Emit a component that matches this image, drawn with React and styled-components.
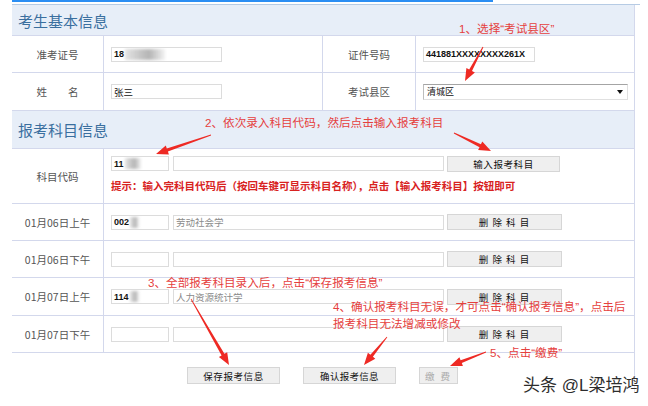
import React from 'react';
import styled, { createGlobalStyle } from 'styled-components';

const GlobalStyle = createGlobalStyle`
  html, body {
    margin: 0;
    padding: 0;
    background: #fff;
  }
  body {
    font-family: "Liberation Sans", "Noto Sans CJK SC", sans-serif;
  }
`;

const CJK = `"Noto Sans CJK SC", "Liberation Sans", sans-serif`;
const MIXED = `"Liberation Sans", "Noto Sans CJK SC", sans-serif`;
const LINE = '#d3d8ec';

const Page = styled.div`
  position: relative;
  width: 648px;
  height: 406px;
  padding-left: 12px;
  box-sizing: border-box;
  overflow: hidden;
`;

const TabLine = styled.div`
  width: 481px;
  height: 2px;
  background: #2b8ef3;
`;

const Rule = styled.div`
  width: 628px;
  height: 1px;
  margin-top: 2px;
  background: #b6cbe4;
`;

const Frame = styled.div`
  width: 623px;
  box-sizing: border-box;
  border-right: 1px solid ${LINE};
`;

const SectionTitle = styled.div`
  height: ${p => p.$h}px;
  box-sizing: border-box;
  display: flex;
  align-items: center;
  padding-left: 6px;
  background: #e7eef8;
  border-bottom: 1px solid ${LINE};
  color: #3a6f9f;
  font: 15px ${CJK};
`;

const InfoGrid = styled.div`
  display: grid;
  grid-template-columns: 92px 219px 93px 1fr;
  grid-template-rows: 37px 38px;
`;

const Cell = styled.div`
  box-sizing: border-box;
  display: flex;
  align-items: center;
  justify-content: ${p => (p.$label ? 'center' : 'flex-start')};
  padding-left: ${p => (p.$label ? 0 : 7)}px;
  border-bottom: 1px solid ${LINE};
  border-right: ${p => (p.$last ? 'none' : `1px solid ${LINE}`)};
  color: #555;
  font: 10.5px ${CJK};
  white-space: pre;
`;

const Field = styled.div`
  width: ${p => p.$w}px;
  height: 15px;
  box-sizing: border-box;
  flex: none;
  display: flex;
  align-items: center;
  padding-left: 2px;
  border: 1px solid #dcdcdc;
  background: #fff;
  overflow: hidden;
  white-space: nowrap;
  color: ${p => (p.$muted ? '#8a8a8a' : '#111')};
  font: ${p => (p.$bold ? 'bold 9px "Liberation Sans", sans-serif' : `9.5px ${CJK}`)};
`;

const Smudge = styled.span`
  display: inline-block;
  width: ${p => p.$w}px;
  height: 11px;
  margin-left: 1px;
  background: linear-gradient(90deg, rgba(200, 200, 200, 0.5), rgba(172, 172, 172, 0.9) 60%, rgba(215, 215, 215, 0.3));
  filter: blur(1.4px);
`;

const Select = styled.div`
  width: 205px;
  height: 16px;
  box-sizing: border-box;
  display: flex;
  align-items: center;
  justify-content: space-between;
  padding: 0 4px 0 3px;
  border: 1px solid #e0e0e0;
  border-top-color: #a4a4a4;
  border-left-color: #bdbdbd;
  font: 9px ${CJK};
  color: #111;
`;

const Caret = styled.span`
  width: 0;
  height: 0;
  border-left: 3px solid transparent;
  border-right: 3px solid transparent;
  border-top: 4px solid #111;
`;

const SubjectRow = styled.div`
  display: grid;
  grid-template-columns: 92px 1fr;
  height: ${p => p.$h}px;
  box-sizing: border-box;
  border-bottom: 1px solid ${LINE};
`;

const RowLabel = styled.div`
  display: flex;
  align-items: center;
  justify-content: center;
  border-right: 1px solid ${LINE};
  color: #555;
  font: 10.5px ${CJK};
`;

const RowBody = styled.div`
  display: flex;
  flex-direction: column;
  justify-content: ${p => (p.$top ? 'flex-start' : 'center')};
  padding: ${p => (p.$top ? '6px' : '0')} 0 0 7px;
  gap: 7px;
`;

const InputLine = styled.div`
  display: flex;
  align-items: center;
  gap: 4px;
  height: 17px;
`;

const Hint = styled.div`
  color: #d8231f;
  font: bold 10.5px/14px ${CJK};
  white-space: nowrap;
`;

const Btn = styled.button`
  width: ${p => p.$w}px;
  height: ${p => p.$h || 16}px;
  box-sizing: border-box;
  flex: none;
  padding: 0;
  margin-left: ${p => p.$ml || 0}px;
  border: 1px solid #d6d6d6;
  background: #efefef;
  color: ${p => (p.disabled ? '#a9a9a9' : '#111')};
  font: 9.5px ${CJK};
  letter-spacing: ${p => p.$ls || 0}px;
  white-space: pre;
`;

const Footer = styled.div`
  height: 40px;
  display: flex;
  align-items: flex-start;
  gap: 23px;
  padding: 14px 0 0 175px;
  box-sizing: border-box;
`;

const Note = styled.div`
  position: absolute;
  left: ${p => p.$x}px;
  top: ${p => p.$y}px;
  color: #e5403d;
  font: 11.6px/17px ${MIXED};
  white-space: pre;
`;

const Watermark = styled.div`
  position: absolute;
  left: 523px;
  top: 375px;
  color: #2d2d2d;
  font: 17px/22px ${MIXED};
  white-space: pre;
  text-shadow: 0 0 2px #fff, 0 0 3px #fff;
`;

const Overlay = styled.svg`
  position: absolute;
  left: 0;
  top: 0;
  pointer-events: none;
`;

function arrowPoints([x1, y1, x2, y2]) {
  const dx = x2 - x1;
  const dy = y2 - y1;
  const len = Math.hypot(dx, dy);
  const ux = dx / len;
  const uy = dy / len;
  const nx = -uy;
  const ny = ux;
  const headLen = 12;
  const bx = x2 - ux * headLen;
  const by = y2 - uy * headLen;
  const pt = (x, y, w) => `${(x + nx * w).toFixed(1)},${(y + ny * w).toFixed(1)}`;
  return [
    pt(x1, y1, 0.4),
    pt(bx, by, 1.6),
    pt(bx, by, 4.8),
    `${x2},${y2}`,
    pt(bx, by, -4.8),
    pt(bx, by, -1.6),
    pt(x1, y1, -0.4),
  ].join(' ');
}

const arrows = [
  [483, 47, 465, 81],
  [211, 135, 156, 154],
  [454, 133, 491, 151],
  [191, 299, 229, 365],
  [387, 337, 364, 365],
  [486, 352, 450, 366],
];

const sessions = [
  { label: '01月06日上午', code: '002', name: '劳动社会学', h: 37 },
  { label: '01月06日下午', h: 37 },
  { label: '01月07日上午', code: '114', name: '人力资源统计学', h: 38 },
  { label: '01月07日下午', h: 37 },
];

export default function App() {
  return (
    <Page>
      <GlobalStyle />
      <TabLine />
      <Rule />
      <Frame>
        <SectionTitle $h={31}>考生基本信息</SectionTitle>
        <InfoGrid>
          <Cell $label>准考证号</Cell>
          <Cell>
            <Field $w={111} $bold>
              18<Smudge $w={40} />
            </Field>
          </Cell>
          <Cell $label>证件号码</Cell>
          <Cell $last>
            <Field $w={112} $bold>441881XXXXXXXX261X</Field>
          </Cell>
          <Cell $label>{'姓　　名'}</Cell>
          <Cell>
            <Field $w={111}>张三</Field>
          </Cell>
          <Cell $label>考试县区</Cell>
          <Cell $last>
            <Select>
              清城区
              <Caret />
            </Select>
          </Cell>
        </InfoGrid>

        <SectionTitle $h={38}>报考科目信息</SectionTitle>
        <SubjectRow $h={55}>
          <RowLabel>科目代码</RowLabel>
          <RowBody $top>
            <InputLine>
              <Field $w={58} $bold>
                11<Smudge $w={16} />
              </Field>
              <Field $w={271} />
              <Btn $w={113} $ml={-1} $ls={0.6}>输入报考科目</Btn>
            </InputLine>
            <Hint>提示：输入完科目代码后（按回车键可显示科目名称），点击【输入报考科目】按钮即可</Hint>
          </RowBody>
        </SubjectRow>
        {sessions.map(s => (
          <SubjectRow key={s.label} $h={s.h}>
            <RowLabel>{s.label}</RowLabel>
            <RowBody>
              <InputLine>
                <Field $w={58} $bold>
                  {s.code}
                  {s.code && <Smudge $w={9} />}
                </Field>
                <Field $w={271} $muted>{s.name}</Field>
                <Btn $w={115} $ml={-1} $ls={1}>{'删 除 科 目'}</Btn>
              </InputLine>
            </RowBody>
          </SubjectRow>
        ))}
        <Footer>
          <Btn $w={93} $h={17} $ls={0.6}>保存报考信息</Btn>
          <Btn $w={93} $h={17} $ls={0.3}>确认报考信息</Btn>
          <Btn $w={39} $h={17} $ls={2} disabled>{'缴 费'}</Btn>
        </Footer>
      </Frame>

      <Note $x={459} $y={20}>1、选择“考试县区”</Note>
      <Note $x={205} $y={114}>2、依次录入科目代码，然后点击输入报考科目</Note>
      <Note $x={148} $y={274}>3、全部报考科目录入后，点击“保存报考信息”</Note>
      <Note $x={333} $y={298}>{'4、确认报考科目无误，才可点击“确认报考信息”，点击后\n报考科目无法增减或修改'}</Note>
      <Note $x={490} $y={344}>5、点击“缴费”</Note>

      <Overlay width="648" height="406" viewBox="0 0 648 406">
        {arrows.map((a, i) => (
          <polygon key={i} points={arrowPoints(a)} fill="#ee2a24" />
        ))}
      </Overlay>
      <Watermark>头条 @L梁培鸿</Watermark>
    </Page>
  );
}
